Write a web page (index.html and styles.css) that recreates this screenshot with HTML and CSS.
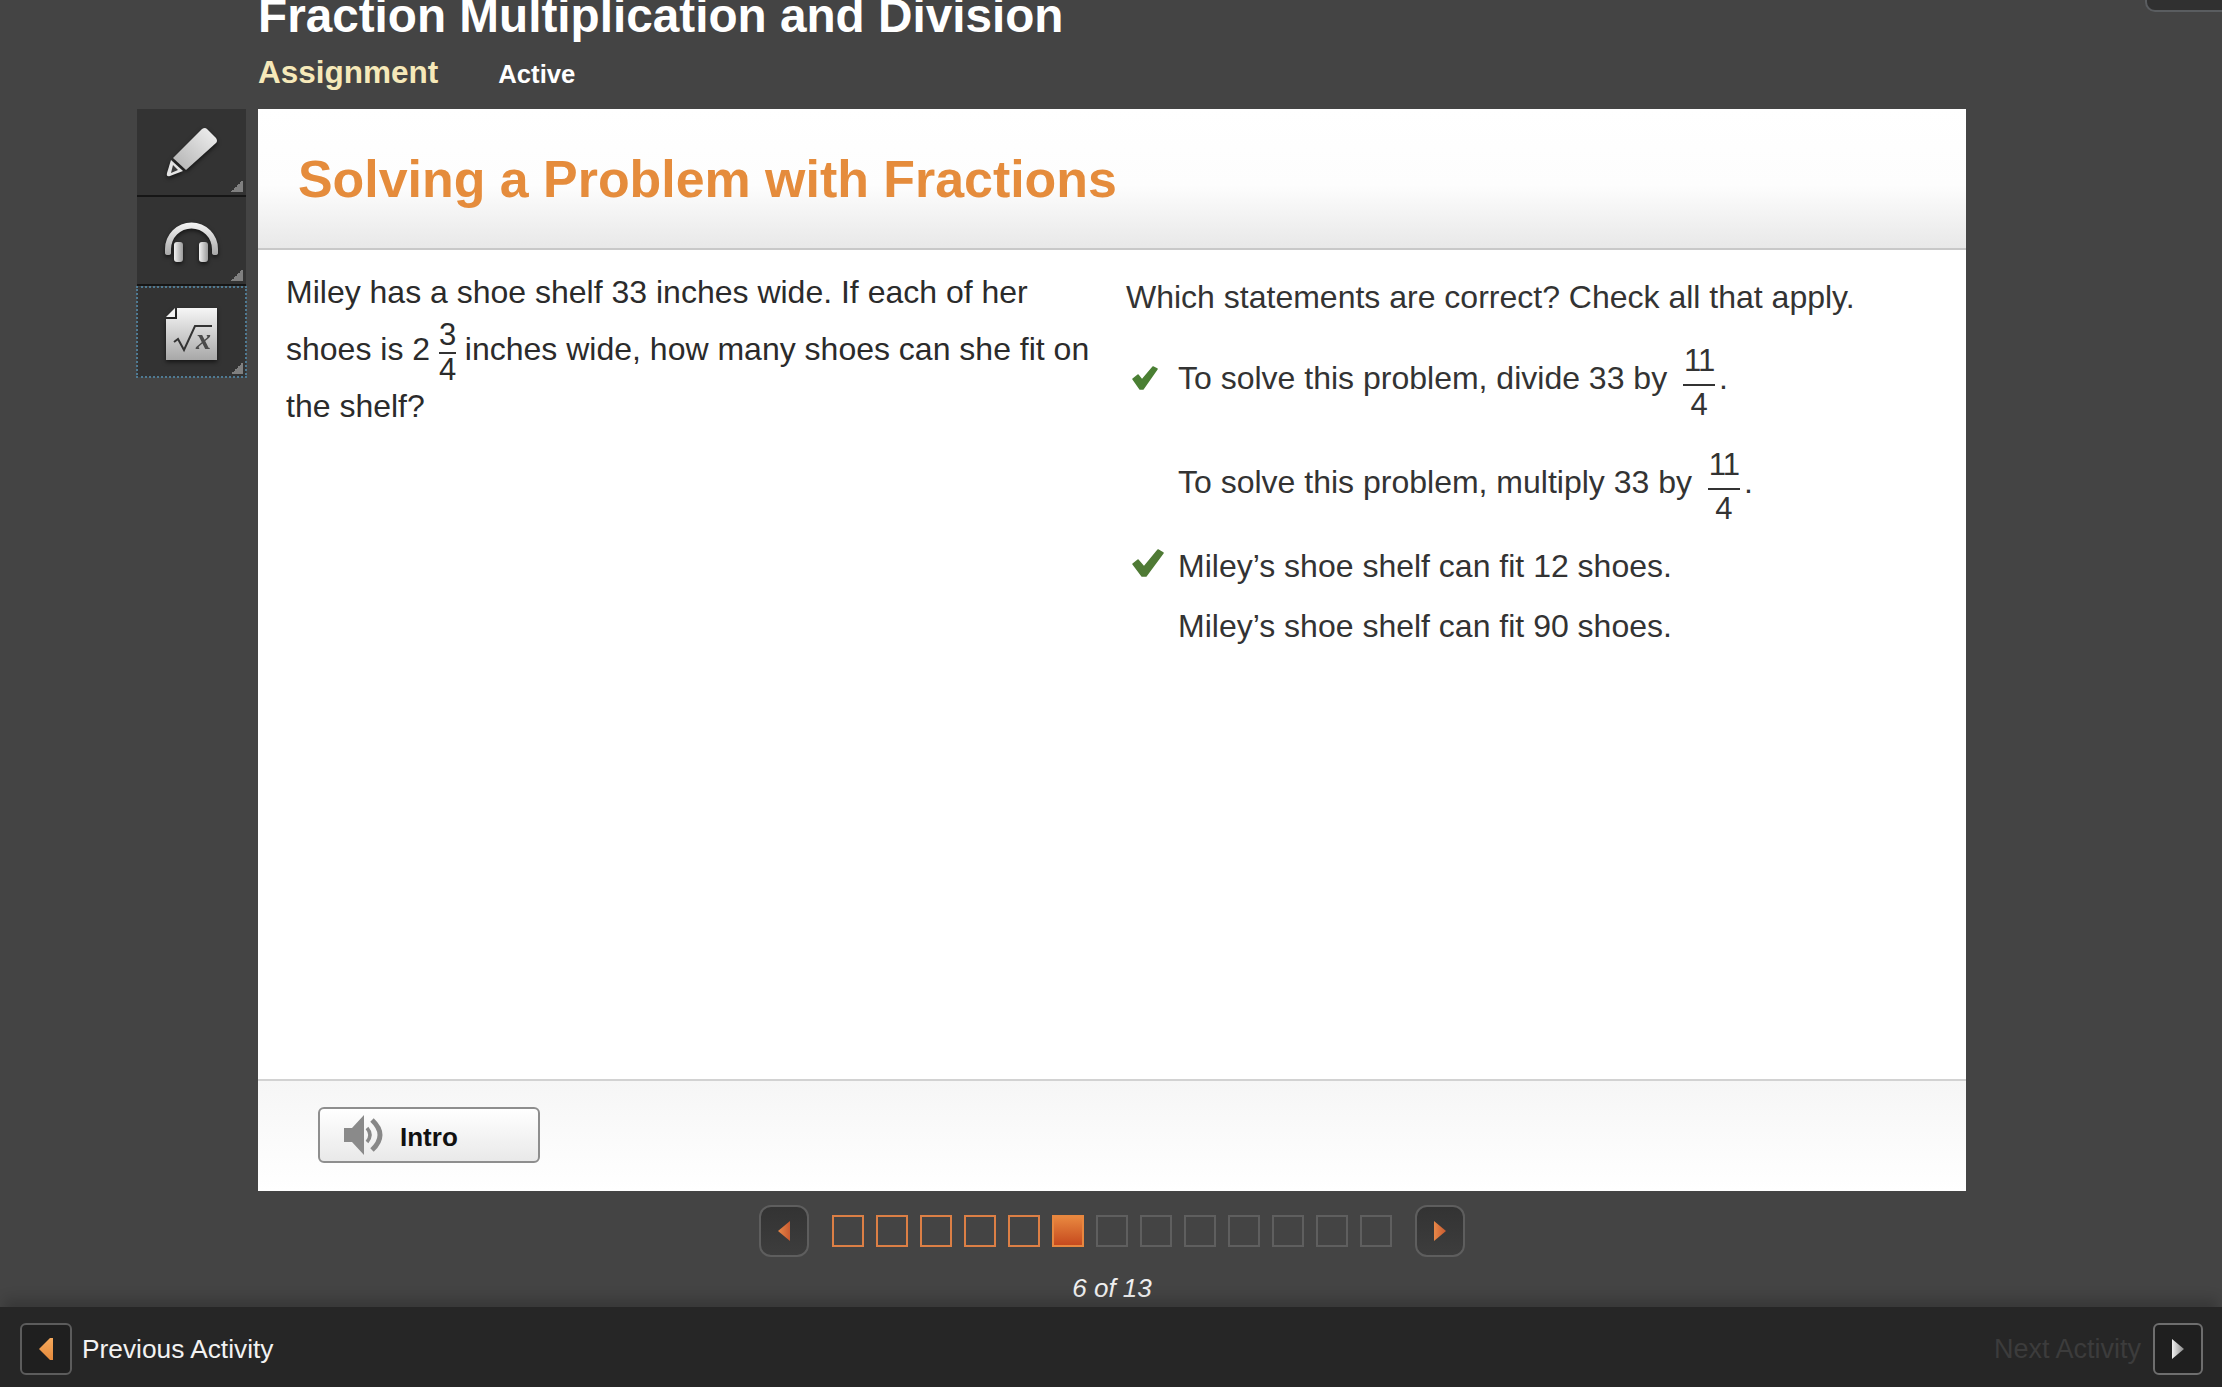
FILE: index.html
```html
<!DOCTYPE html>
<html lang="en">
<head>
<meta charset="utf-8">
<title>Solving a Problem with Fractions</title>
<link rel="stylesheet" href="styles.css">
</head>
<body>
<svg class="defs" width="0" height="0" aria-hidden="true">
  <defs>
    <linearGradient id="metal" x1="0" y1="0" x2="0" y2="1">
      <stop offset="0" stop-color="#f6f6f6"/>
      <stop offset="1" stop-color="#a8a8a8"/>
    </linearGradient>
    <linearGradient id="pencil" x1="1" y1="0" x2="0" y2="1">
      <stop offset="0" stop-color="#f2f2f2"/>
      <stop offset="1" stop-color="#b0b0b0"/>
    </linearGradient>
    <linearGradient id="metalh" x1="0" y1="0" x2="1" y2="0">
      <stop offset="0" stop-color="#f2f2f2"/>
      <stop offset="1" stop-color="#9a9a9a"/>
    </linearGradient>
    <linearGradient id="arrowOrange" x1="0" y1="0" x2="1" y2="0">
      <stop offset="0" stop-color="#e88848"/>
      <stop offset="1" stop-color="#c85a30"/>
    </linearGradient>
    <linearGradient id="arrowPale" x1="0" y1="0" x2="0" y2="1">
      <stop offset="0" stop-color="#f6a95c"/>
      <stop offset="1" stop-color="#e58a3c"/>
    </linearGradient>
    <linearGradient id="arrowGrey" x1="0" y1="0" x2="1" y2="0">
      <stop offset="0" stop-color="#f0f0f0"/>
      <stop offset="1" stop-color="#8a8a8a"/>
    </linearGradient>
  </defs>
</svg>
<div class="page">
  <header class="top">
    <div class="heading">
      <h1 class="course">Fraction Multiplication and Division</h1>
      <div class="meta">
        <span class="kind">Assignment</span>
        <span class="status">Active</span>
      </div>
    </div>
    <div class="corner-tab"></div>
  </header>

  <div class="stage">
    <nav class="rail">
      <button class="tool">
        <svg class="tool-icon" viewBox="0 0 52 50" width="52" height="50">
          <path d="M36 2 Q39 0 41 2 L50 11 Q52 14 50 16 L20 43 L7 31 Z" fill="url(#pencil)"/>
          <path d="M5 33 L17 44 L4 49 Q0 50 1 46 Z" fill="#e4e4e4"/>
          <path d="M7 38 L12 43 L5 46 Z" fill="#3a3a3a"/>
        </svg>
      </button>
      <button class="tool tool-phones">
        <svg class="tool-icon" viewBox="0 0 53 40" width="53" height="40">
          <path d="M0 27 A26.5 26.5 0 0 1 53 27 V31 Q53 33 50 33 Q47 33 47 31 V27 A20.5 20.5 0 0 0 6 27 V31 Q6 33 3 33 Q0 33 0 31 Z" fill="url(#metal)"/>
          <rect x="9" y="20" width="9" height="20" rx="3" fill="url(#metalh)"/>
          <rect x="34" y="20" width="9" height="20" rx="3" fill="url(#metalh)"/>
        </svg>
      </button>
      <button class="tool tool-focus">
        <svg class="tool-icon" viewBox="0 0 51 52" width="51" height="52">
          <path d="M11 0 H51 V52 H0 V11 H11 Z" fill="url(#metal)"/>
          <path d="M9 0 V9 H0 Z" fill="#f0f0f0"/>
          <path d="M8 34 L12 31 L18 42 L29 18 H46" fill="none" stroke="#333" stroke-width="2"/>
          <text class="sqrt-x" x="30" y="41">x</text>
        </svg>
      </button>
    </nav>

    <div class="column">
      <main class="card">
        <div class="card-head">
          <h2 class="activity-title">Solving a Problem with Fractions</h2>
        </div>
        <div class="card-body">
          <section class="problem">
            <p class="problem-text">Miley has a shoe shelf 33 inches wide. If each of her<br>shoes is 2 <span class="frac frac-small"><span class="num">3</span><span class="den">4</span></span> inches wide, how many shoes can she fit on<br>the shelf?</p>
          </section>
          <section class="question">
            <p class="prompt">Which statements are correct? Check all that apply.</p>
            <ul class="options">
              <li class="option option-frac1">
                <span class="mark"><svg viewBox="0 0 26 24" width="26" height="24"><path d="M1 13 L6 9 L10 14 L21 1 L25 3 L11 23 L8 23 Z" fill="#4a7f33" stroke="#4a7f33" stroke-width="1.5" stroke-linejoin="round"/></svg></span>
                <span class="opt-text">To solve this problem, divide 33 by <span class="frac frac-large"><span class="num">11</span><span class="den">4</span></span>.</span>
              </li>
              <li class="option option-frac2">
                <span class="mark"></span>
                <span class="opt-text">To solve this problem, multiply 33 by <span class="frac frac-large"><span class="num">11</span><span class="den">4</span></span>.</span>
              </li>
              <li class="option option-three">
                <span class="mark"><svg class="mark-big" viewBox="0 0 32 28" width="32" height="28"><path d="M1 15 L6 11 L12 18 L26 1 L31 4 L14 27 L10 27 Z" fill="#4f7a35" stroke="#4f7a35" stroke-width="1.5" stroke-linejoin="round"/></svg></span>
                <span class="opt-text">Miley’s shoe shelf can fit 12 shoes.</span>
              </li>
              <li class="option option-four">
                <span class="mark"></span>
                <span class="opt-text">Miley’s shoe shelf can fit 90 shoes.</span>
              </li>
            </ul>
          </section>
        </div>
        <div class="card-foot">
          <button class="intro">
            <svg viewBox="0 0 40 40" width="40" height="40">
              <path d="M0 13 H8 L20 0 V40 L8 27 H0 Z" fill="#8a8a8a"/>
              <path d="M23 13 Q29 20 23 27" fill="none" stroke="#888" stroke-width="3.5"/>
              <path d="M28 5 Q44 20 28 35" fill="none" stroke="#888" stroke-width="5"/>
            </svg>
            <span>Intro</span>
          </button>
        </div>
      </main>

      <div class="pager">
        <button class="nav-btn">
          <svg viewBox="0 0 12 20" width="12" height="20"><path d="M12 0 V20 L0 10 Z" fill="url(#arrowOrange)"/></svg>
        </button>
        <ol class="steps">
          <li class="step done"></li><li class="step done"></li><li class="step done"></li><li class="step done"></li><li class="step done"></li>
          <li class="step current"></li>
          <li class="step"></li><li class="step"></li><li class="step"></li><li class="step"></li><li class="step"></li><li class="step"></li><li class="step"></li>
        </ol>
        <button class="nav-btn">
          <svg viewBox="0 0 12 20" width="12" height="20"><path d="M0 0 V20 L12 10 Z" fill="url(#arrowOrange)"/></svg>
        </button>
      </div>
      <div class="count">6 of 13</div>
    </div>
  </div>

  <footer class="bar">
    <div class="bar-group">
      <button class="bar-btn">
        <svg viewBox="0 0 14 22" width="14" height="22"><path d="M14 0 V22 H11 L0 11 L11 0 Z" fill="url(#arrowPale)"/></svg>
      </button>
      <span class="bar-label">Previous Activity</span>
    </div>
    <div class="bar-group">
      <span class="bar-label bar-label-off">Next Activity</span>
      <button class="bar-btn bar-btn-off">
        <svg viewBox="0 0 12 20" width="12" height="20"><path d="M0 0 L12 10 L0 20 Z" fill="url(#arrowGrey)"/></svg>
      </button>
    </div>
  </footer>
</div>
</body>
</html>
```
FILE: styles.css
```css
* { box-sizing: border-box; }
html, body { margin: 0; padding: 0; height: 100%; overflow: hidden; }
body { background: #444444; font-family: "Liberation Sans", Arial, sans-serif; }
.defs { display: block; height: 0; }
button { font-family: inherit; padding: 0; cursor: pointer; }

.page { height: 1387px; display: flex; flex-direction: column; }

.top { height: 109px; flex: none; display: flex; justify-content: space-between; padding-left: 258px; overflow: hidden; }
.course { margin: 0; height: 40px; display: flex; align-items: flex-end; font-size: 47.7px; line-height: 48px; font-weight: 700; color: #ffffff; white-space: nowrap; }
.meta { display: flex; align-items: baseline; gap: 60px; margin-top: 14px; }
.kind { font-size: 31.5px; line-height: 36px; font-weight: 700; color: #f6e9b9; }
.status { font-size: 25.7px; line-height: 36px; font-weight: 700; color: #ffffff; }
.corner-tab { width: 77px; height: 12px; flex: none; background: #303030; border: 2px solid #5a5d60; border-top: 0; border-right: 0; border-bottom-left-radius: 10px; }

.stage { display: flex; padding-left: 137px; gap: 12px; flex: none; }
.rail { width: 109px; flex: none; display: flex; flex-direction: column; height: 268px; }
.tool { position: relative; width: 109px; height: 88px; background: #333333; border: 0; border-bottom: 2px solid #161616; display: flex; align-items: center; justify-content: center; }
.tool-phones { height: 89px; padding-top: 2px; }
.tool-focus { margin-top: 1px; height: 90px; padding-top: 3px; outline: 2px dotted #4f7a93; outline-offset: -1px; border-bottom: 0; }
.tool::after { content: ""; position: absolute; right: 3px; bottom: 3px; width: 12px; height: 12px; background: linear-gradient(135deg, transparent 50%, #808080 50%); }
.tool-icon { display: block; filter: drop-shadow(0 2px 2px rgba(0,0,0,.6)); }
.sqrt-x { font-family: "Liberation Serif", serif; font-style: italic; font-weight: 700; font-size: 30px; fill: #4a4a4a; }

.column { width: 1708px; flex: none; }
.card { height: 1082px; background: #ffffff; display: flex; flex-direction: column; }
.card-head { height: 141px; flex: none; padding: 40px 0 0 40px; border-bottom: 2px solid #c8c8c8; background: linear-gradient(#ffffff 0%, #fdfdfd 55%, #e8e8e8 100%); }
.activity-title { margin: 0; font-size: 51.9px; line-height: 60px; font-weight: 700; color: #e58c3c; white-space: nowrap; }
.card-body { flex: 1; display: flex; min-height: 0; }
.problem { width: 868px; flex: none; padding: 14px 0 0 28px; }
.problem-text { margin: 0; font-size: 32px; line-height: 57px; color: #2b2b2b; white-space: nowrap; }
.question { padding: 27px 0 0 0; color: #333333; font-size: 32px; }
.prompt { margin: 0; line-height: 40px; white-space: nowrap; }
.options { list-style: none; margin: 17px 0 0 0; padding: 0; }
.option { display: flex; align-items: center; white-space: nowrap; }
.option-frac1 { height: 88px; }
.option-frac2 { height: 104px; margin-top: 8px; }
.option-three { height: 40px; margin-top: 12px; }
.option-four { height: 40px; margin-top: 20px; }
.mark { width: 52px; flex: none; padding-left: 6px; display: flex; align-items: center; }
.mark svg { display: block; }
.mark-big { margin-top: -6px; }
.frac { display: inline-flex; flex-direction: column; align-items: center; vertical-align: middle; }
.frac .num { border-bottom: 2px solid #333333; text-align: center; }
.frac-small { width: 17px; font-size: 31px; line-height: 32px; margin: -8px 0 -10px; }
.frac-small .num, .frac-small .den { width: 100%; padding-bottom: 1px; white-space: nowrap; }
.frac-small .den { padding-bottom: 0; }
.frac-large { width: 32px; font-size: 31px; line-height: 38px; margin: -26px 4px -32px 7px; }
.frac-large .num { width: 100%; padding-bottom: 4px; letter-spacing: -1px; }

.card-foot { height: 112px; flex: none; border-top: 2px solid #d2d2d2; background: linear-gradient(#f6f6f6, #ffffff); padding: 26px 0 0 60px; }
.intro { width: 222px; height: 56px; border: 2px solid #8e8e8e; border-radius: 6px; background: linear-gradient(#ffffff, #e9e9e9); display: flex; align-items: center; gap: 16px; padding-left: 24px; }
.intro span { font-family: "Liberation Sans", sans-serif; font-weight: 700; font-size: 26px; color: #111111; margin-top: 5px; }

.pager { display: flex; justify-content: center; align-items: center; gap: 23px; margin-top: 14px; height: 52px; }
.nav-btn { width: 50px; height: 52px; border: 2px solid #5e5e5e; border-radius: 12px; background: linear-gradient(#333333, #3d3d3d); display: flex; align-items: center; justify-content: center; }
.steps { list-style: none; margin: 0; padding: 0; display: flex; gap: 12px; }
.step { width: 32px; height: 32px; border: 2px solid #5f5f5f; }
.step.done { border-color: #dc7f45; }
.step.current { border-color: #e8873f; background: linear-gradient(#e8873f, #c64a1e); }
.count { margin-top: 16px; text-align: center; font-size: 26px; line-height: 30px; font-style: italic; color: #f0f0f0; }

.bar { margin-top: auto; height: 80px; flex: none; background: #262626; box-shadow: 0 -12px 12px -4px rgba(0,0,0,.18); display: flex; justify-content: space-between; padding: 16px 19px 0 20px; }
.bar-group { display: flex; align-items: center; gap: 10px; height: 52px; }
.bar-btn { width: 52px; height: 52px; background: #1f1f1f; border: 2px solid #5c5c5c; border-radius: 6px; display: flex; align-items: center; justify-content: center; }
.bar-btn-off { width: 50px; border-color: #6e6e6e; }
.bar-label { font-size: 26.3px; color: #f2f2f2; }
.bar-label-off { font-size: 27px; color: #3c3c3c; margin-right: 2px; }
```
